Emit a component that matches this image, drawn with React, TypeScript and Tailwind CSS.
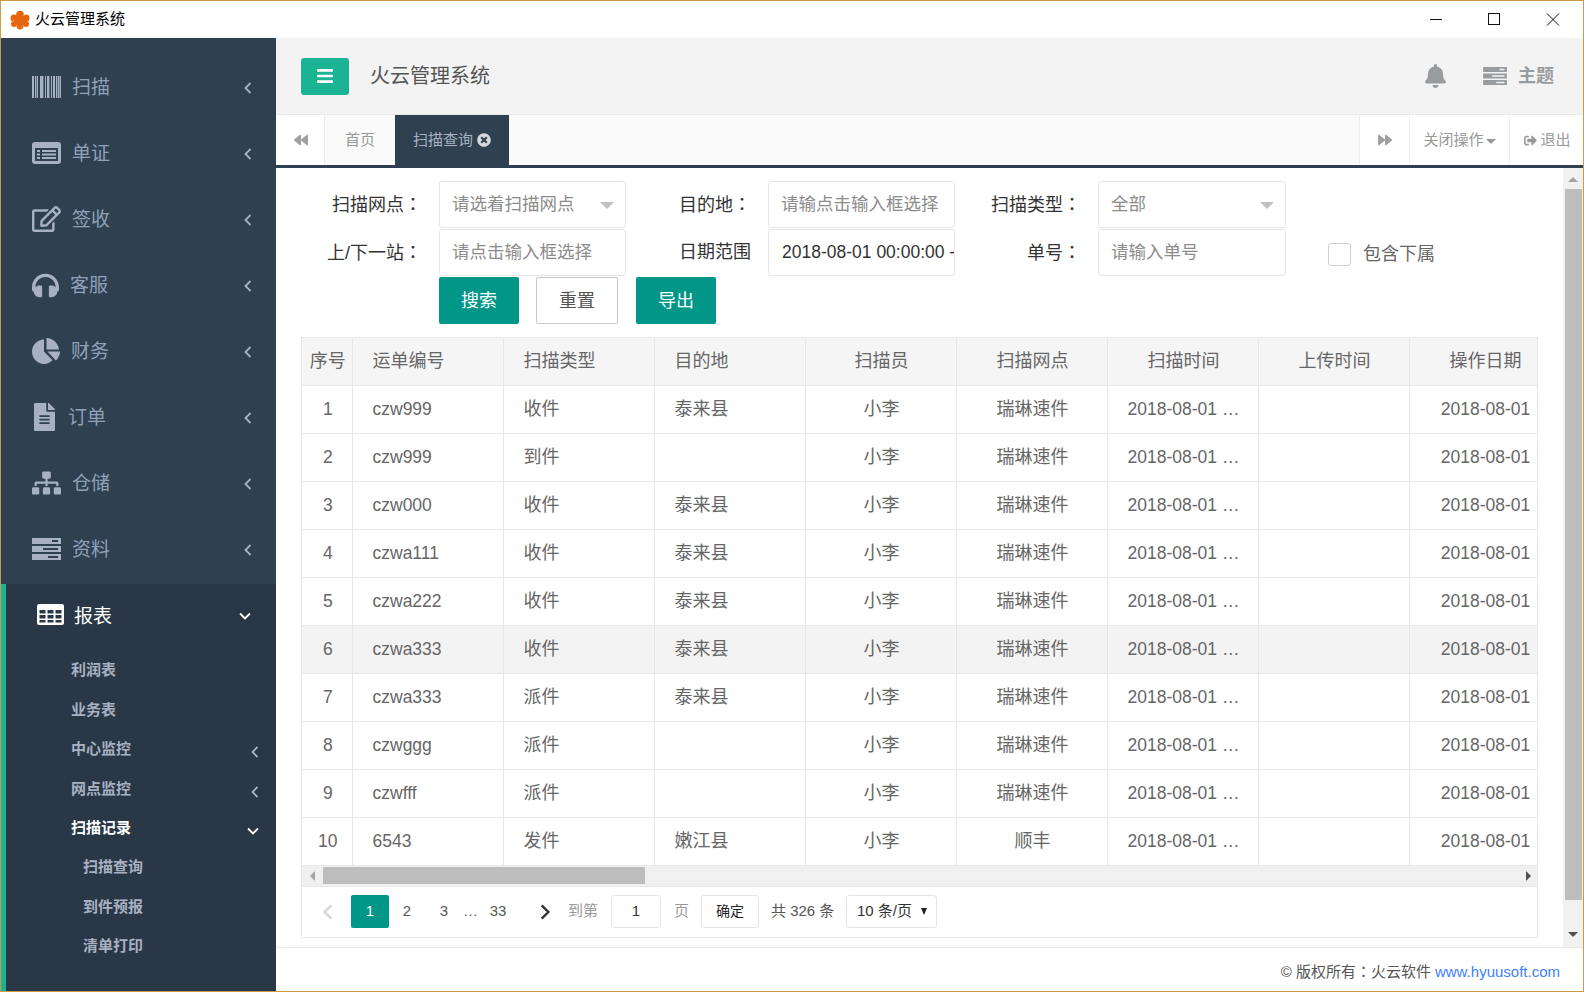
import React from 'react';
import {
  FaBackward,
  FaBars,
  FaBell,
  FaFileAlt,
  FaForward,
  FaHeadphones,
  FaRegEdit,
  FaSignOutAlt,
  FaSitemap,
  FaTimesCircle,
} from 'react-icons/fa';

const BarcodeIcon = ({ className }: { className?: string }) => (
  <svg viewBox="0 0 29 22" className={className} fill="currentColor">
    {[0, 3, 5, 8, 10, 13, 15, 16, 19, 21, 24, 26].map((x, i) => (
      <rect key={x} x={x} y="0" width={i % 3 === 0 ? 2 : i % 3 === 1 ? 1.4 : 1} height="22" />
    ))}
    <rect x="27.500" y="0" width="1.500" height="22" />
  </svg>
);

const ListAltIcon = ({ className }: { className?: string }) => (
  <svg viewBox="0 0 29 22" className={className} fill="currentColor">
    <path fillRule="evenodd" d="M3 0h23a3 3 0 0 1 3 3v16a3 3 0 0 1-3 3H3a3 3 0 0 1-3-3V3a3 3 0 0 1 3-3zM3 6v12.500a.5.5 0 0 0 .5.5h22a.5.5 0 0 0 .5-.5V6zM5 8h3v2H5zm5 0h14v2H10zm-5 3.500h3v2H5zm5 0h14v2H10zM5 15h3v2H5zm5 0h14v2H10z" />
  </svg>
);

const TableIcon = ({ className }: { className?: string }) => (
  <svg viewBox="0 0 27 21" className={className} fill="currentColor">
    <path fillRule="evenodd" d="M2 0h23a2 2 0 0 1 2 2v17a2 2 0 0 1-2 2H2a2 2 0 0 1-2-2V2a2 2 0 0 1 2-2zm.500 6v3.500h6V6zm8 0v3.500h6V6zm8 0v3.500h6V6zm-16 5v3.500h6V11zm8 0v3.500h6V11zm8 0v3.500h6V11zm-16 5v2.500h6V16zm8 0v2.500h6V16zm8 0v2.500h6V16z" />
  </svg>
);

const PieIcon = ({ className }: { className?: string }) => (
  <svg viewBox="0 0 28 26" className={className} fill="currentColor">
    <path d="M12 1.500v12l8.500 8.800A12.300 12.300 0 0 1 12 26 12.300 12.300 0 0 1 0 13.500 12.300 12.300 0 0 1 12 1.500z" />
    <path d="M14.500 0A13 13 0 0 1 27 11.500H14.500z" />
    <path d="M15.500 13.500H28a12.500 12.500 0 0 1-4.200 9z" />
  </svg>
);

const ServerIcon = ({ className }: { className?: string }) => (
  <svg viewBox="0 0 29 22" className={className} fill="currentColor">
    <path fillRule="evenodd" d="M0 0h29v6H0zM20 2v2h6V2z" />
    <path fillRule="evenodd" d="M0 8h29v6H0zM11 10v2h15v-2z" />
    <path fillRule="evenodd" d="M0 16h29v6H0zM16 18v2h10v-2z" />
  </svg>
);

const Logo = () => (
  <svg viewBox="0 0 20 20" className="w-[20px] h-[20px]" fill="#e8650f">
    <circle cx="10" cy="4.500" r="3.800" />
    <circle cx="4" cy="8" r="3.500" />
    <circle cx="16" cy="8" r="3.500" />
    <circle cx="4" cy="14" r="3" />
    <circle cx="16" cy="14" r="3" />
    <circle cx="10" cy="16" r="3.500" />
    <circle cx="10" cy="10" r="6" />
    <g fill="#ffb27a">
      <circle cx="7" cy="16.500" r="0.600" />
      <circle cx="14" cy="5.500" r="0.600" />
      <circle cx="11.500" cy="17" r="0.500" />
      <circle cx="3.500" cy="10.500" r="0.500" />
    </g>
  </svg>
);

const Chevron = ({ open, className }: { open?: boolean; className?: string }) => (
  <svg viewBox="0 0 12 12" className={className} fill="none" stroke="currentColor" strokeWidth="1.800">
    <path d={open ? 'M1 3.500l5 5 5-5' : 'M8.500 1l-5 5 5 5'} />
  </svg>
);

const menus = [
  { label: '扫描', icon: <BarcodeIcon className="w-[29px] h-[22px] -mt-[4px]" /> },
  { label: '单证', icon: <ListAltIcon className="w-[29px] h-[22px] -mt-[4px]" /> },
  { label: '签收', icon: <FaRegEdit className="w-[29px] h-[26px] -mt-[4px]" /> },
  { label: '客服', icon: <FaHeadphones className="w-[27px] h-[27px] -mt-[4px]" /> },
  { label: '财务', icon: <PieIcon className="w-[28px] h-[26px] -mt-[4px]" /> },
  { label: '订单', icon: <FaFileAlt className="w-[25px] h-[28px] -mt-[4px]" /> },
  { label: '仓储', icon: <FaSitemap className="w-[29px] h-[24px] -mt-[4px]" /> },
  { label: '资料', icon: <ServerIcon className="w-[29px] h-[22px] -mt-[4px]" /> },
];

const subMenus = [
  { label: '利润表', cls: 'pl-[65px] text-[#a7b1c2]' },
  { label: '业务表', cls: 'pl-[65px] text-[#a7b1c2]' },
  { label: '中心监控', cls: 'pl-[65px] text-[#a7b1c2]', arrow: 'left' },
  { label: '网点监控', cls: 'pl-[65px] text-[#a7b1c2]', arrow: 'left' },
  { label: '扫描记录', cls: 'pl-[65px] text-white', arrow: 'down' },
  { label: '扫描查询', cls: 'pl-[77px] text-[#a7b1c2]' },
  { label: '到件预报', cls: 'pl-[77px] text-[#a7b1c2]' },
  { label: '清单打印', cls: 'pl-[77px] text-[#a7b1c2]' },
];

const rows = [
  ['1', 'czw999', '收件', '泰来县', '瑞琳速件'],
  ['2', 'czw999', '到件', '', '瑞琳速件'],
  ['3', 'czw000', '收件', '泰来县', '瑞琳速件'],
  ['4', 'czwa111', '收件', '泰来县', '瑞琳速件'],
  ['5', 'czwa222', '收件', '泰来县', '瑞琳速件'],
  ['6', 'czwa333', '收件', '泰来县', '瑞琳速件'],
  ['7', 'czwa333', '派件', '泰来县', '瑞琳速件'],
  ['8', 'czwggg', '派件', '', '瑞琳速件'],
  ['9', 'czwfff', '派件', '', '瑞琳速件'],
  ['10', '6543', '发件', '嫩江县', '顺丰'],
];

const headers = ['序号', '运单编号', '扫描类型', '目的地', '扫描员', '扫描网点', '扫描时间', '上传时间', '操作日期'];

// Traditional CJK font centres the full-width colon in its cell, as the screenshot does
const Colon = () => <span className="font-['Noto_Sans_CJK_TC']">：</span>;

const Sidebar = () => (
  <aside className="w-[275px] shrink-0 bg-[#2f4050] flex flex-col pt-[18px]">
    {menus.map((m) => (
      <div key={m.label} className="h-[66px] flex items-center pl-[31px] text-[#a7b1c2]">
        <span className="shrink-0 flex items-center">{m.icon}</span>
        <span className="ml-[11px] -mt-[4px] text-[19px] leading-none text-[#8fa0b8]">{m.label}</span>
        <Chevron className="ml-auto mr-[22px] -mt-[3px] w-[12px] h-[12px]" />
      </div>
    ))}
    <div className="flex-1 bg-[#2a3746] border-l-[5px] border-[#1ab394]">
      <div className="h-[66px] flex items-center pl-[31px] text-white">
        <TableIcon className="w-[27px] h-[21px] -mt-[6px]" />
        <span className="ml-[10px] -mt-[2px] text-[19px] leading-none">报表</span>
        <Chevron open className="ml-auto mr-[25px] -mt-[3px] w-[12px] h-[12px]" />
      </div>
      <div className="pt-[1px]">
        {subMenus.map((s) => (
          <div key={s.label} className={`h-[39.4px] flex items-center text-[15px] font-bold ${s.cls}`}>
            <span>{s.label}</span>
            {s.arrow && (
              <Chevron
                open={s.arrow === 'down'}
                className={`ml-auto mt-[6px] w-[12px] h-[12px] ${s.arrow === 'down' ? 'mr-[17px]' : 'mr-[15px]'}`}
              />
            )}
          </div>
        ))}
      </div>
    </div>
  </aside>
);

const FormInput = ({ text, dark, caret, wide }: { text: string; dark?: boolean; caret?: boolean; wide?: boolean }) => (
  <div
    className={`${wide ? 'w-[188px]' : 'w-[187px]'} ${dark ? 'pl-[13px]' : 'pl-[12px]'} h-[47px] shrink-0 border border-[#e5e6e7] rounded-[3px] flex items-center overflow-hidden relative bg-white`}
  >
    <span className={`text-[17.5px] whitespace-nowrap ${dark ? 'text-[#333]' : 'text-[#8c8c8c]'}`}>{text}</span>
    {caret && (
      <span className="absolute right-[11px] top-[20px] w-0 h-0 border-x-[7px] border-x-transparent border-t-[7px] border-t-[#c0c0c0]" />
    )}
  </div>
);

const FormLabel = ({ text, width, colon }: { text: string; width: string; colon?: boolean }) => (
  <div className={`${width} shrink-0 pr-[17px] text-right text-[18px] text-[#333] whitespace-nowrap`}>
    {text}
    {colon && <Colon />}
  </div>
);

const cellCls = 'border-r border-b border-[#e7e7e7]';

const ScanTable = () => (
  <div className="border border-[#e7e7e7] overflow-hidden">
    <div className="overflow-hidden">
      <table className="table-fixed w-[1258px] border-collapse text-[18px] text-[#666]">
        <colgroup>
          <col className="w-[50px]" />
          {[0, 1, 2, 3, 4, 5, 6, 7].map((i) => (
            <col key={i} className="w-[151px]" />
          ))}
        </colgroup>
        <thead>
          <tr className="h-[47px] bg-[#f5f5f5]">
            {headers.map((h, i) => (
              <th
                key={h}
                className={`font-normal ${cellCls} ${i === 1 || i === 2 || i === 3 ? 'text-left pl-[20px]' : 'text-center pl-[2px]'}`}
              >
                {h}
              </th>
            ))}
          </tr>
        </thead>
        <tbody>
          {rows.map((r, i) => (
            <tr key={r[0]} className={`h-[48px] ${i === 5 ? 'bg-[#f3f3f3]' : 'bg-white'}`}>
              <td className={`text-center pl-[2px] text-[17.5px] ${cellCls}`}>{r[0]}</td>
              <td className={`pl-[20px] text-[17.5px] ${cellCls}`}>{r[1]}</td>
              <td className={`pl-[20px] ${cellCls}`}>{r[2]}</td>
              <td className={`pl-[20px] ${cellCls}`}>{r[3]}</td>
              <td className={`text-center pl-[2px] ${cellCls}`}>小李</td>
              <td className={`text-center pl-[2px] ${cellCls}`}>{r[4]}</td>
              <td className={`text-center pl-[2px] text-[17.5px] ${cellCls}`}>2018-08-01 …</td>
              <td className={cellCls}></td>
              <td className={`text-center pl-[2px] text-[17.5px] whitespace-nowrap ${cellCls}`}>2018-08-01</td>
            </tr>
          ))}
        </tbody>
      </table>
    </div>
    {/* horizontal scrollbar */}
    <div className="h-[21px] bg-[#f0f0f0] border-b border-[#e7e7e7] flex items-center relative">
      <span className="absolute left-[8px] top-[5px] w-0 h-0 border-y-[5px] border-y-transparent border-r-[5px] border-r-[#a3a3a3]" />
      <div className="ml-[21px] w-[322px] h-[17px] bg-[#bdbdbd]" />
      <span className="absolute right-[6px] top-[5px] w-0 h-0 border-y-[5px] border-y-transparent border-l-[5px] border-l-[#505050]" />
    </div>
    {/* pager */}
    <div className="h-[50px] flex items-center text-[15px] text-[#555] pl-[7px]">
      <div className="w-[38px] mr-[4px] flex justify-center text-[#d5d5d5]">
        <Chevron className="w-[16px] h-[18px]" />
      </div>
      <div className="w-[38px] h-[33px] bg-[#009688] text-white rounded-[2px] flex items-center justify-center">1</div>
      <div className="w-[36px] text-center">2</div>
      <div className="w-[38px] text-center">3</div>
      <div className="w-[12px] text-center text-[#666]">…</div>
      <div className="w-[46px] text-center">33</div>
      <div className="w-[46px] flex justify-center text-[#333] pl-[2px]">
        <Chevron className="w-[16px] h-[18px] rotate-180" />
      </div>
      <div className="ml-[1px] w-[43px] text-[#999]">到第</div>
      <div className="w-[50px] h-[33px] border border-[#e5e6e7] rounded-[3px] flex items-center justify-center text-[#333]">1</div>
      <div className="ml-[13px] w-[27px] text-[#999]">页</div>
      <div className="w-[58px] h-[33px] border border-[#e5e6e7] rounded-[3px] flex items-center justify-center text-[#222] text-[14px]">确定</div>
      <div className="ml-[12px] w-[75px] whitespace-nowrap">共 326 条</div>
      <div className="w-[91px] h-[33px] border border-[#e5e6e7] rounded-[3px] flex items-center pl-[10px] text-[#333] relative">
        10 条/页
        <span className="absolute right-[9px] top-[12px] w-0 h-0 border-x-[3.500px] border-x-transparent border-t-[7px] border-t-[#222]" />
      </div>
    </div>
  </div>
);

export default function App() {
  return (
    <div
      className="w-[1584px] h-[992px] border border-[#cf9a45] flex flex-col overflow-hidden bg-white"
      style={{ fontFamily: '"Liberation Sans", "Noto Sans CJK SC", sans-serif' }}
    >
      {/* window title bar */}
      <div className="h-[37px] shrink-0 flex items-center pl-[9px] bg-white">
        <Logo />
        <span className="ml-[5px] text-[15px] text-black">火云管理系统</span>
        <svg viewBox="0 0 130 14" className="ml-auto mr-[23px] w-[130px] h-[14px]" fill="none" stroke="#111" strokeWidth="1">
          <path d="M0 6.500h12" />
          <rect x="58.500" y="0.500" width="11" height="11" />
          <path d="M117 0.500l12 12M129 0.500l-12 12" />
        </svg>
      </div>

      <div className="flex-1 flex min-h-0">
        <Sidebar />

        <main className="flex-1 flex flex-col min-w-0">
          {/* top header */}
          <div className="h-[76px] shrink-0 bg-[#f3f3f3] flex items-center pl-[25px]">
            <button className="w-[48px] h-[37px] bg-[#1ab394] rounded-[3px] flex items-center justify-center text-white">
              <FaBars className="w-[18px] h-[18px]" />
            </button>
            <span className="ml-[21px] text-[20px] text-[#555]">火云管理系统</span>
            <FaBell className="ml-auto w-[23px] h-[24px] text-[#999c9e]" />
            <ServerIcon className="ml-[36px] w-[24px] h-[18px] text-[#999c9e]" />
            <span className="ml-[11px] mr-[29px] text-[18px] font-bold text-[#999c9e]">主题</span>
          </div>

          {/* tab bar */}
          <div className="h-[54px] shrink-0 bg-[#fafafa] border-t border-[#e7eaec] border-b-[3px] border-b-[#2f4050] flex items-stretch text-[15px] text-[#999]">
            <div className="w-[49px] bg-white border-r border-[#eeeeee] flex items-center justify-center pl-[2px]">
              <FaBackward className="w-[14px] h-[14px] text-[#a0a0a0]" />
            </div>
            <div className="w-[70px] flex items-center justify-center">首页</div>
            <div className="w-[114px] bg-[#2f4050] text-[#a7b1c2] flex items-center justify-center gap-[4px]">
              扫描查询
              <FaTimesCircle className="w-[14px] h-[14px] text-[#d5d9df]" />
            </div>
            <div className="ml-auto w-[50px] bg-white border-l border-[#eeeeee] flex items-center justify-center">
              <FaForward className="w-[14px] h-[14px] text-[#a0a0a0]" />
            </div>
            <div className="w-[100px] bg-white border-l border-[#eeeeee] flex items-center justify-center gap-[2px]">
              关闭操作
              <span className="mt-[3px] w-0 h-0 border-x-[5px] border-x-transparent border-t-[5px] border-t-[#999]" />
            </div>
            <div className="w-[74px] bg-white border-l border-[#eeeeee] flex items-center justify-center gap-[3px] pl-[2px]">
              <FaSignOutAlt className="w-[13px] h-[13px]" />
              退出
            </div>
          </div>

          {/* page body + page scrollbar */}
          <div className="h-[780px] shrink-0 flex border-b border-[#e7e7e7]">
            <div className="flex-1 min-w-0 pl-[25px] pr-[25px] pt-[13px]">
              <div className="flex items-center">
                <FormLabel text="扫描网点" width="w-[138px]" colon />
                <FormInput text="请选着扫描网点" caret />
                <FormLabel text="目的地" width="w-[142px]" colon />
                <FormInput text="请输点击输入框选择" />
                <FormLabel text="扫描类型" width="w-[143px]" colon />
                <FormInput text="全部" caret wide />
              </div>
              <div className="flex items-center mt-[1px]">
                <FormLabel text="上/下一站" width="w-[138px]" colon />
                <FormInput text="请点击输入框选择" />
                <FormLabel text="日期范围" width="w-[142px]" />
                <FormInput text="2018-08-01 00:00:00 -" dark />
                <FormLabel text="单号" width="w-[143px]" colon />
                <FormInput text="请输入单号" wide />
                <div className="ml-[42px] w-[23px] h-[23px] mt-[4px] border border-[#cfcfcf] rounded-[3px]" />
                <span className="ml-[12px] mt-[4px] text-[18px] text-[#666]">包含下属</span>
              </div>
              <div className="flex items-center pl-[138px] mt-[1px] text-[18px]">
                <button className="w-[80px] h-[47px] bg-[#009688] text-white rounded-[2px] pt-[1px]">搜索</button>
                <button className="ml-[17px] w-[82px] h-[47px] bg-white border border-[#c9c9c9] text-[#555] rounded-[2px] pt-[1px]">重置</button>
                <button className="ml-[18px] w-[80px] h-[47px] bg-[#009688] text-white rounded-[2px] pt-[1px]">导出</button>
              </div>
              <div className="mt-[13px]">
                <ScanTable />
              </div>
            </div>
            {/* page scrollbar */}
            <div className="w-[20px] shrink-0 bg-[#f1f1f1] flex flex-col items-center relative">
              <span className="mt-[9px] w-0 h-0 border-x-[5px] border-x-transparent border-b-[5px] border-b-[#a3a3a3]" />
              <div className="mt-[7px] w-[17px] h-[711px] bg-[#bdbdbd]" />
              <span className="mt-[32px] w-0 h-0 border-x-[5px] border-x-transparent border-t-[5px] border-t-[#505050]" />
            </div>
          </div>

          {/* footer */}
          <div className="flex-1 flex items-center justify-end pr-[23px] pt-[5px] text-[15px] text-[#555]">
            <span>
              © 版权所有
              <Colon />
              火云软件
            </span>
            <span className="ml-[4px] text-[#3f7fff]">www.hyuusoft.com</span>
          </div>
        </main>
      </div>
    </div>
  );
}
